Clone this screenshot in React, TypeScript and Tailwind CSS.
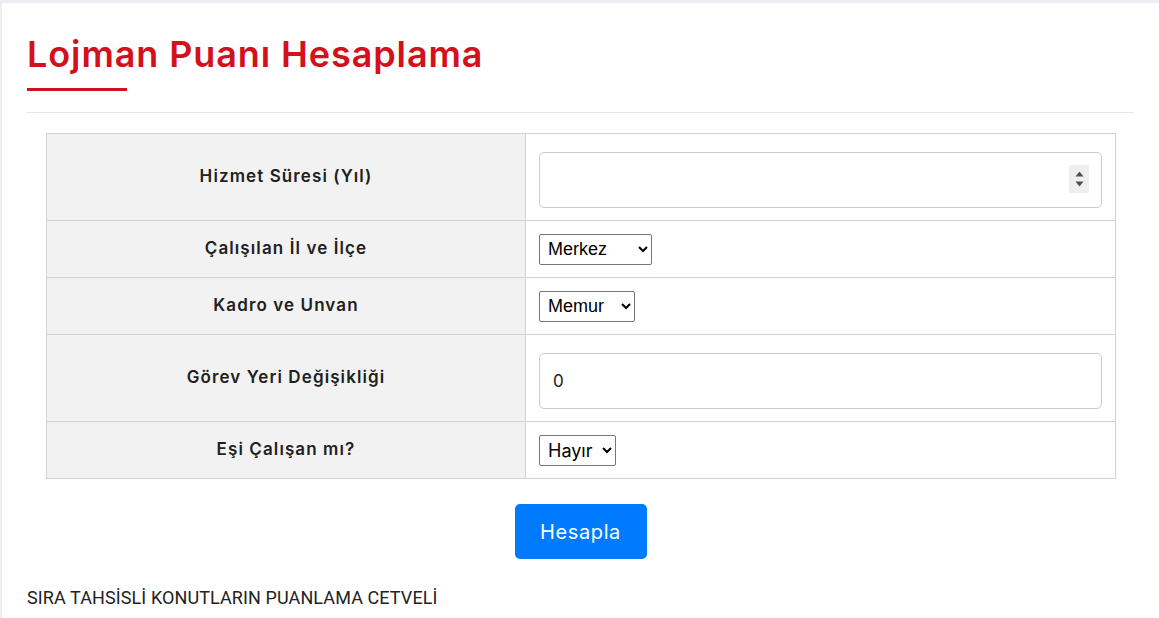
const rows = [
  { label: 'Hizmet Süresi (Yıl)', kind: 'number', tall: true },
  { label: 'Çalışılan İl ve İlçe', kind: 'select', value: 'Merkez', w: 'w-[113px]' },
  { label: 'Kadro ve Unvan', kind: 'select', value: 'Memur', w: 'w-[96px]' },
  { label: 'Görev Yeri Değişikliği', kind: 'text', tall: true },
  { label: 'Eşi Çalışan mı?', kind: 'select', value: 'Hayır', w: 'w-[77px]', poppins: true },
];

function Spinner() {
  return (
    <div className="absolute right-[13px] top-[13px] flex h-[28px] w-[20px] flex-col items-center justify-center gap-[4px] bg-[#efefef]">
      <svg width="9" height="6" viewBox="0 0 9 6"><path d="M4.5 0.5 L8.5 5.5 L0.5 5.5 Z" fill="#505050" /></svg>
      <svg width="9" height="6" viewBox="0 0 9 6"><path d="M0.5 0.5 L8.5 0.5 L4.5 5.5 Z" fill="#505050" /></svg>
    </div>
  );
}

export default function App() {
  const sans = "font-['Inter','Open_Sans',sans-serif]";
  return (
    <div className="min-h-screen bg-[#eceef1] pl-[2px] pt-[3px]">
      <div className={`min-h-[615px] bg-white px-[25px] pt-[26px] pb-6 ${sans}`}>
        <h1 className="text-[36px] font-semibold leading-[50px] tracking-[0.9px] text-[#d3101c]">
          Lojman Puanı Hesaplama
        </h1>
        <div className="mt-[9px] h-[3px] w-[100px] bg-[#d3101c]" />
        <div className="mt-[21px] h-px bg-[#e6e6e6]" />

        <table className="mx-[19px] mt-[20px] w-[1070px] border-collapse">
          <tbody>
            {rows.map((r) => (
              <tr key={r.label} className={r.tall ? 'h-[87px]' : 'h-[57px]'}>
                <td className="w-[479px] border border-[#d2d2d2] bg-[#f2f2f2] text-center text-[17px] font-semibold tracking-[1.1px] text-[#212121]">
                  {r.label}
                </td>
                <td className="border border-[#d2d2d2] px-[13px]">
                  {r.kind === 'select' ? (
                    <select
                      defaultValue={r.value}
                      className={`${r.w} h-[31px] rounded-[2px] border border-[#767676] bg-white pl-[4px] text-[18px] text-black ${r.poppins ? sans : "font-['Liberation_Sans',Arial,sans-serif]"}`}
                    >
                      <option>{r.value}</option>
                    </select>
                  ) : (
                    <div className="relative mt-[6px]">
                      <input
                        type="text"
                        defaultValue={r.kind === 'text' ? '0' : ''}
                        className="h-[56px] w-full rounded-[5px] border border-[#cccccc] px-[13px] text-[17px] text-[#222]"
                      />
                      {r.kind === 'number' && <Spinner />}
                    </div>
                  )}
                </td>
              </tr>
            ))}
          </tbody>
        </table>

        <div className="mt-[25px] flex justify-center">
          <button className="h-[55px] w-[132px] rounded-[5px] bg-[#007bff] text-[20px] tracking-[0.6px] text-white">
            Hesapla
          </button>
        </div>

        <p className="mt-[25px] font-['Roboto',sans-serif] text-[18px] tracking-[0.1px] text-[#222]">
          SIRA TAHSİSLİ KONUTLARIN PUANLAMA CETVELİ
        </p>
      </div>
    </div>
  );
}
